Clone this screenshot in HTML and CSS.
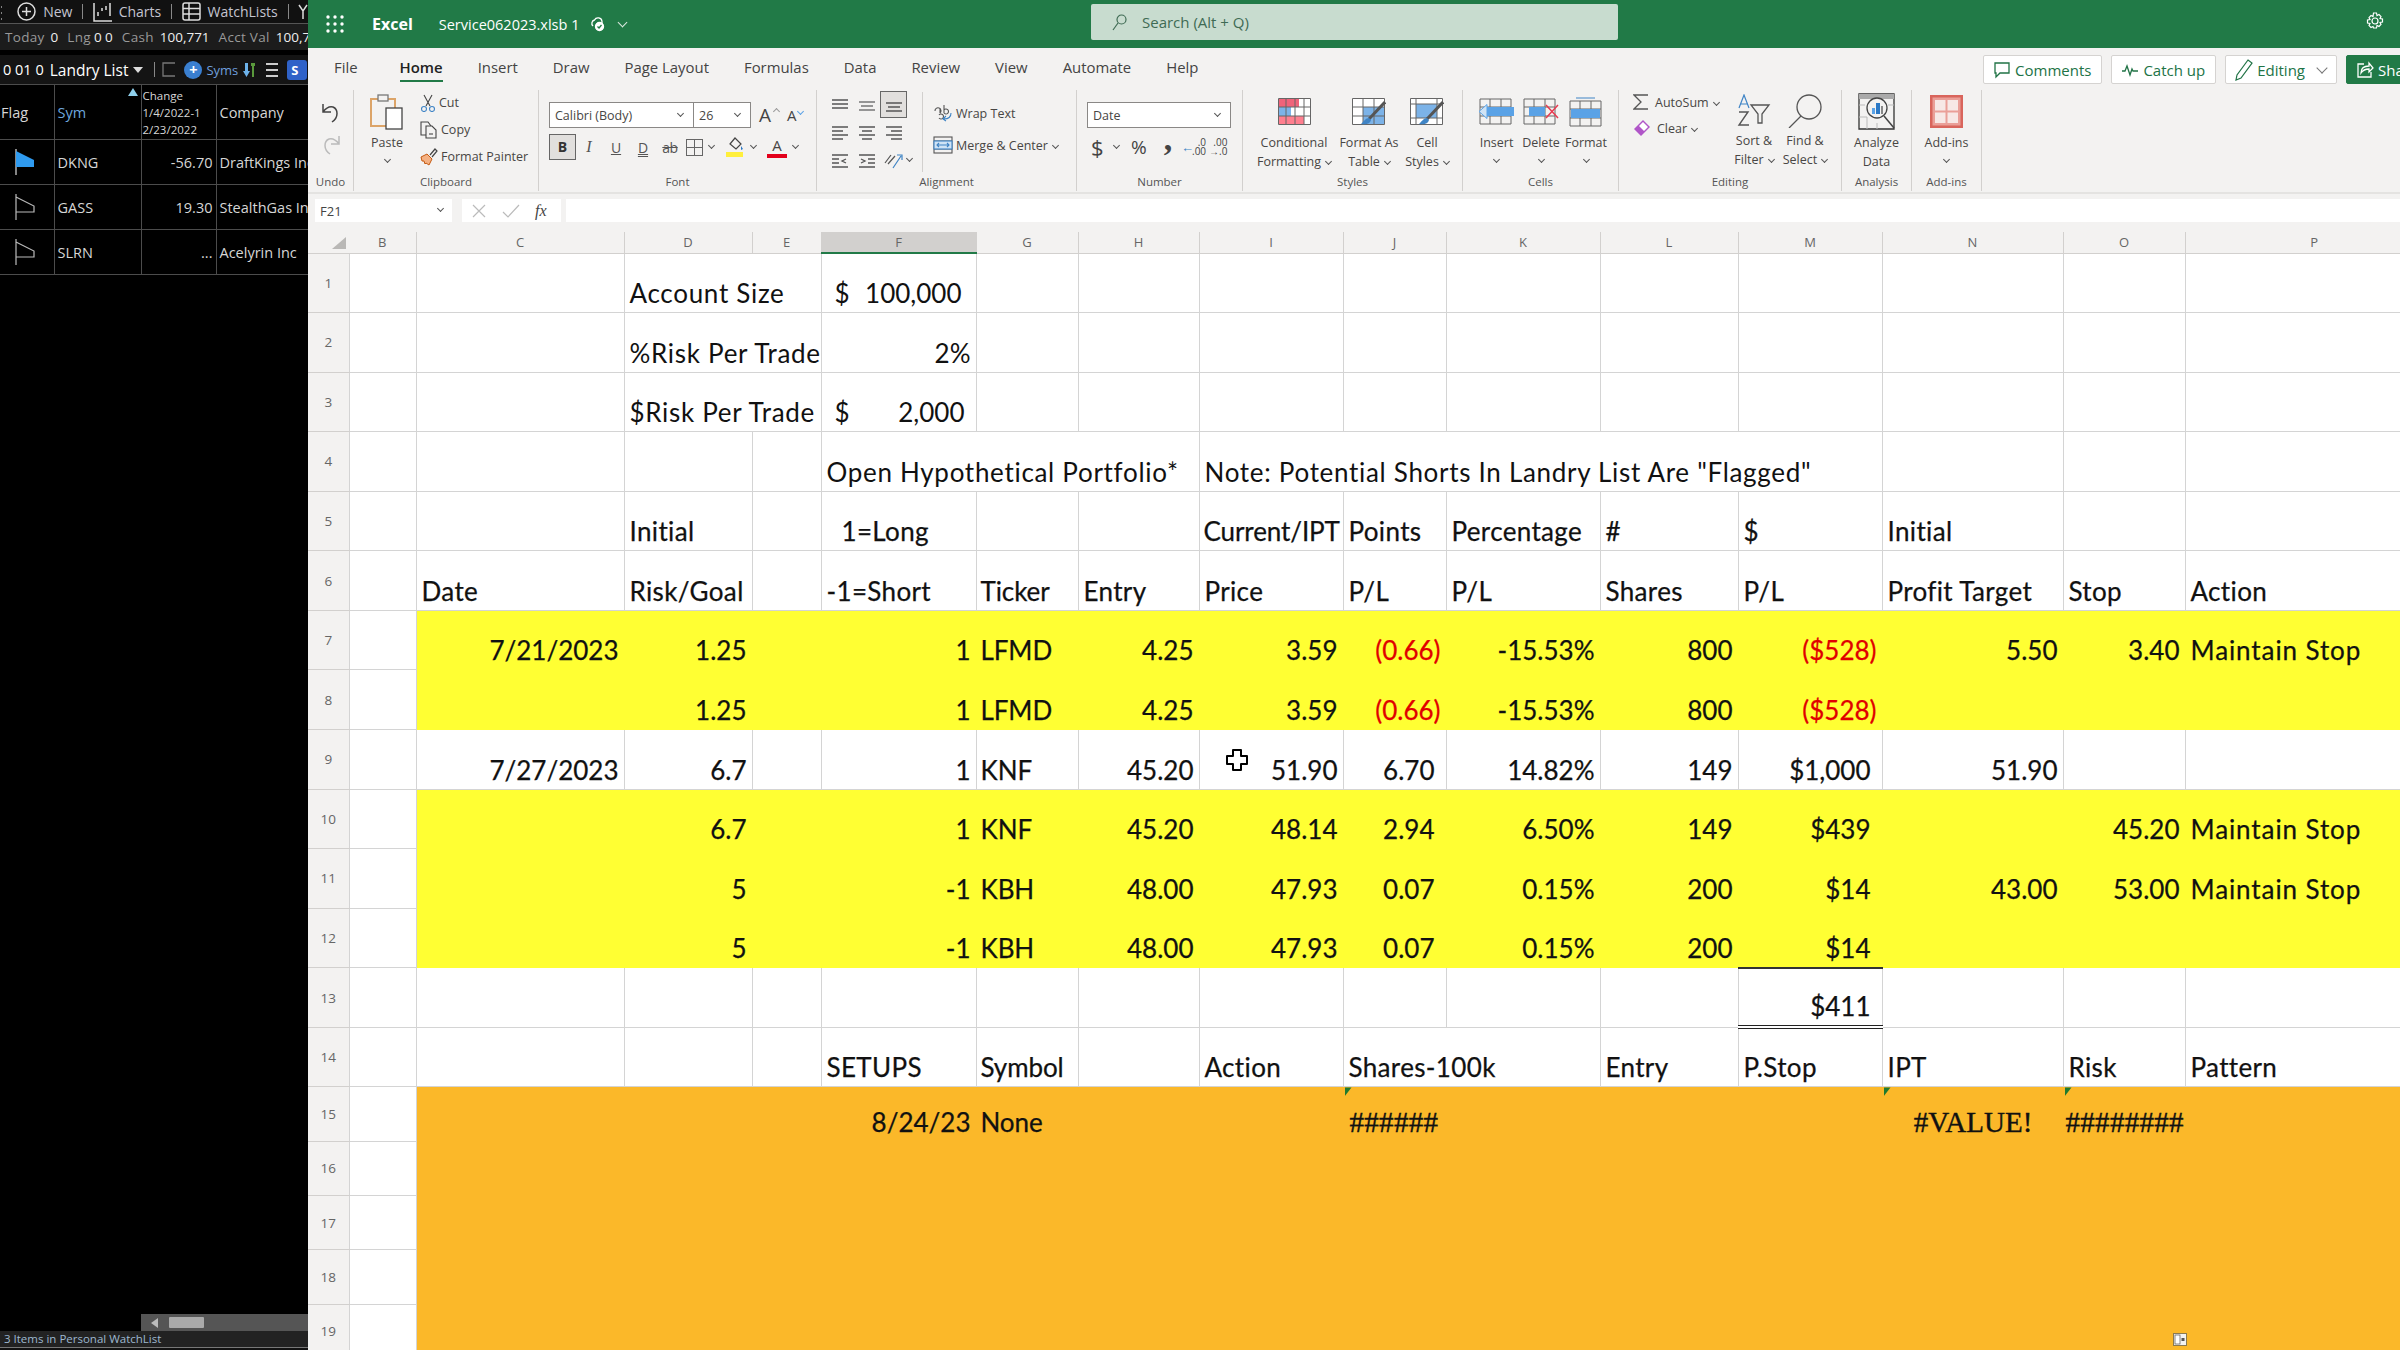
FILE: index.html
```html
<!DOCTYPE html>
<html lang="en">
<head>
  <meta charset="UTF-8" />
  <title>Service062023.xlsb - Excel</title>
  <link rel="stylesheet" href="styles.css">
</head>
<body>
  <div class="watch">
    <div class="wbar">
      <span class="grip"></span>
      <svg class="wi" width="19" height="19" viewBox="0 0 19 19" fill="none" stroke="#ddd" stroke-width="1.5"><circle cx="9.5" cy="9.5" r="8.5"/><path d="M9.5 5v9M5 9.5h9"/></svg>
      <span>New</span><i class="wsep"></i>
      <svg class="wi" width="19" height="20" viewBox="0 0 19 20" fill="none" stroke="#ddd" stroke-width="1.5"><path d="M1 1v18h18M5 14v-4M9 9V6M13 8V4M17 14V1"/></svg>
      <span>Charts</span><i class="wsep"></i>
      <svg class="wi" width="19" height="19" viewBox="0 0 19 19" fill="none" stroke="#ddd" stroke-width="1.5"><rect x="1" y="1" width="17" height="17" rx="2"/><path d="M1 6.5h17M1 12h17M7 1v17"/></svg>
      <span>WatchLists</span><i class="wsep"></i>
      <svg class="wi" width="10" height="16" viewBox="0 0 10 16" fill="none" stroke="#ddd" stroke-width="1.5"><path d="M1 1l4 6 4-6M5 7v8"/></svg>
    </div>
    <div class="wstats">
      <span class="dim">Today</span><b>0</b><span class="dim">Lng</span><b class="tight">0 0</b><span class="dim">Cash</span><b>100,771</b><span class="dim">Acct Val</span><b>100,7</b>
    </div>
    <div class="wlist">
      <span>0 01 0</span><strong>Landry List</strong><i class="wdown"></i><i class="wsep short"></i>
      <svg width="13" height="15" viewBox="0 0 13 15" fill="none" stroke="#777" stroke-width="1.3"><path d="M13 1H1v13h12"/></svg>
      <span class="wplus">+</span><span class="syms">Syms</span>
      <svg width="13" height="16" viewBox="0 0 13 16"><path d="M2 1h3v8h2l-3.500 6L0 9h2z" fill="#6db2ea"/><path d="M8 1h4v3h-1v11H9V4H8z" fill="#5a9a3c"/></svg>
      <span class="burger"></span><span class="chip">S</span>
    </div>
    <table class="wtable">
      <colgroup><col class="w1"><col class="w2"><col class="w3"><col class="w4"></colgroup>
      <tr class="whead">
        <th>Flag</th><th class="blue">Sym<i class="sort"></i></th><th class="chg">Change<br>1/4/2022-1<br>2/23/2022</th><th>Company</th>
      </tr>
      <tr>
        <td class="fl"><svg width="20" height="26" viewBox="0 0 20 26"><path d="M1 0v26" stroke="#ccc" stroke-width="1.300"/><path d="M1 2l18 9v7H1z" fill="#2f9bf0"/></svg></td>
        <td>DKNG</td><td class="num">-56.70</td><td>DraftKings Inc</td>
      </tr>
      <tr>
        <td class="fl"><svg width="20" height="26" viewBox="0 0 20 26" fill="none" stroke="#bbb" stroke-width="1.200"><path d="M1 0v26M1 3l18 9v6H1"/></svg></td>
        <td>GASS</td><td class="num">19.30</td><td>StealthGas Inc</td>
      </tr>
      <tr>
        <td class="fl"><svg width="20" height="26" viewBox="0 0 20 26" fill="none" stroke="#bbb" stroke-width="1.200"><path d="M1 0v26M1 3l18 9v6H1"/></svg></td>
        <td>SLRN</td><td class="num">...</td><td>Acelyrin Inc</td>
      </tr>
    </table>
    <div class="wfill"></div>
    <div class="wscroll"><span class="warrow"></span><span class="wthumb"></span></div>
    <div class="wstatus">3 Items in Personal WatchList</div>
    <div class="wfoot"></div>
  </div>

  <div class="excel">
    <div class="titlebar">
      <svg class="waffle" width="18" height="18" viewBox="0 0 18 18" fill="#fff"><circle cx="2" cy="2" r="1.700"/><circle cx="9" cy="2" r="1.700"/><circle cx="16" cy="2" r="1.700"/><circle cx="2" cy="9" r="1.700"/><circle cx="9" cy="9" r="1.700"/><circle cx="16" cy="9" r="1.700"/><circle cx="2" cy="16" r="1.700"/><circle cx="9" cy="16" r="1.700"/><circle cx="16" cy="16" r="1.700"/></svg>
      <span class="appname">Excel</span>
      <span class="docname">Service062023.xlsb 1</span>
      <svg class="cloud" width="16" height="16" viewBox="0 0 16 16" fill="none" stroke="#fff" stroke-width="1.300"><path d="M12 9V5.500A4 4 0 0 0 4.500 4 3.500 3.500 0 0 0 3 10"/><circle cx="9.500" cy="10.500" r="4" fill="#fff"/><path d="M7.500 10.500l1.500 1.500 2.500-3" stroke="#217a47"/></svg>
      <i class="chev light"></i>
      <div class="search">
        <svg width="15" height="17" viewBox="0 0 15 17" fill="none" stroke="#3f6b54" stroke-width="1.200"><circle cx="9.500" cy="5.500" r="4.500"/><path d="M6 9l-5 7"/></svg>
        <span>Search (Alt + Q)</span>
      </div>
      <svg class="gear" width="18" height="18" viewBox="0 0 18 18" fill="none" stroke="#fff" stroke-width="1.200"><circle cx="9" cy="9" r="3"/><path d="M7.500 1h3l.5 2.500 2-1 2 2-1 2 2.500.5v3l-2.500.5 1 2-2 2-2-1-.5 2.500h-3L7 14.500l-2 1-2-2 1-2L1.500 11V8l2.500-.5-1-2 2-2 2 1z"/></svg>
    </div>

    <div class="ribbon">
      <div class="tabs">
        <span class="tab first">File</span>
        <span class="tab active">Home</span>
        <span class="tab">Insert</span>
        <span class="tab">Draw</span>
        <span class="tab">Page Layout</span>
        <span class="tab">Formulas</span>
        <span class="tab">Data</span>
        <span class="tab">Review</span>
        <span class="tab">View</span>
        <span class="tab">Automate</span>
        <span class="tab">Help</span>
        <div class="actions">
          <span class="act">
            <svg width="18" height="18" viewBox="0 0 18 18" fill="none" stroke="#217346" stroke-width="1.300"><path d="M2 2h14v10H7l-4 4v-4H2z"/></svg>Comments
          </span>
          <span class="act">
            <svg width="18" height="14" viewBox="0 0 18 14" fill="none" stroke="#217346" stroke-width="1.300"><path d="M1 8h3l2-5 3 9 2-6 1 2h5"/></svg>Catch up
          </span>
          <span class="act">
            <svg width="18" height="22" viewBox="0 0 18 22" fill="none" stroke="#217346" stroke-width="1.200"><path d="M13 1l4 3L6 19l-5 2 1-5z"/></svg>Editing<i class="chev edit"></i>
          </span>
          <span class="act share">
            <svg width="18" height="18" viewBox="0 0 18 18" fill="none" stroke="#fff" stroke-width="1.300"><path d="M8 3H2v13h13v-5M5 12c0-5 3-7 8-7V2l4 5-4 4V8c-4 0-6 1-8 4z"/></svg>Share
          </span>
        </div>
      </div>

      <div class="groups">
        <div class="group g-undo">
          <div class="gbody stack">
            <svg width="22" height="22" viewBox="0 0 22 22" fill="none" stroke="#444" stroke-width="1.500"><path d="M3 2v8h8M3 10c3-4 6-6 10-5 5 2 6 10-1 15"/></svg>
            <svg width="22" height="22" viewBox="0 0 22 22" fill="none" stroke="#bbb" stroke-width="1.500"><path d="M19 2v8h-8M19 10c-3-4-6-6-10-5-5 2-6 10 1 15"/></svg>
          </div>
          <div class="glabel">Undo</div>
        </div>

        <div class="group g-clip">
          <div class="gbody">
            <div class="big paste">
              <div class="bicon">
                <svg width="34" height="36" viewBox="0 0 34 36" fill="none"><rect x="1" y="5" width="24" height="27" stroke="#dca468" stroke-width="2"/><rect x="8" y="1" width="10" height="6" fill="#f3f2f1" stroke="#777" stroke-width="1.300"/><rect x="16" y="14" width="16" height="21" fill="#fff" stroke="#444" stroke-width="1.300"/></svg>
              </div>
              <span>Paste</span><i class="chev"></i>
            </div>
            <div class="smalls clip">
              <div class="si">
                <svg width="16" height="18" viewBox="0 0 16 18" fill="none" stroke="#444" stroke-width="1.100"><path d="M4 1l6 11M12 1L6 12"/><circle cx="4" cy="15" r="2.500" stroke="#3f84c5"/><circle cx="12" cy="15" r="2.500" stroke="#3f84c5"/></svg>
                <span>Cut</span>
              </div>
              <div class="si">
                <svg width="18" height="18" viewBox="0 0 18 18" fill="none" stroke="#444" stroke-width="1.100"><path d="M7 14H1V1h7l3 4"/><path d="M6 5h6l4 4v8H6z" fill="#f3f2f1"/><path d="M9 13h4"/></svg>
                <span>Copy</span>
              </div>
              <div class="si">
                <svg width="18" height="18" viewBox="0 0 18 18" fill="none"><path d="M1 9l6-3 5 5-3 6-3-2-1 1-1-3-2 0z" fill="#f4b183" stroke="#c55a11"/><path d="M10 7l5-6 2 2-5 6" stroke="#444" stroke-width="1.200"/></svg>
                <span>Format Painter</span>
              </div>
            </div>
          </div>
          <div class="glabel">Clipboard</div>
        </div>

        <div class="group g-font">
          <div class="gbody column">
            <div class="frow">
              <span class="sel fname">Calibri (Body)<i class="chev"></i></span>
              <span class="sel fsize">26<i class="chev"></i></span>
              <span class="growA">A<i class="carat"></i></span>
              <span class="growA small">A<i class="carat down"></i></span>
            </div>
            <div class="frow lower">
              <span class="bold-btn">B</span>
              <span class="fi it">I</span>
              <span class="fi ul">U</span>
              <span class="fi ul dbl">D</span>
              <span class="fi st">ab</span>
              <svg class="bd" width="17" height="17" viewBox="0 0 17 17" fill="none" stroke="#666" stroke-width="1"><rect x=".5" y=".5" width="16" height="16"/><path d="M8.500 1v15M1 8.500h15"/></svg>
              <i class="chev tight"></i>
              <svg class="bd fill" width="19" height="20" viewBox="0 0 19 20"><path d="M9 1l6 6-5 5-6-5z" fill="none" stroke="#444" stroke-width="1.200"/><path d="M15 9l2 3-2 1z" fill="#2b78c5"/><rect y="15" width="17" height="5" fill="#ffef3c"/></svg>
              <i class="chev tight"></i>
              <span class="fc">A</span>
              <i class="chev tight"></i>
            </div>
          </div>
          <div class="glabel">Font</div>
        </div>

        <div class="group g-align">
          <div class="gbody">
            <div class="agrid">
              <svg width="18" height="14" viewBox="0 0 18 14" stroke="#555" stroke-width="1.300"><path d="M1 2h16M1 6h16M1 10h16"/></svg>
              <svg width="18" height="14" viewBox="0 0 18 14" stroke="#777" stroke-width="1.300"><path d="M1 4h16M3 8h12M1 12h16"/></svg>
              <span class="abox"><svg width="18" height="14" viewBox="0 0 18 14" stroke="#555" stroke-width="1.300"><path d="M1 5h16M3 9h12M1 13h16"/></svg></span>
              <svg width="18" height="16" viewBox="0 0 18 16" stroke="#555" stroke-width="1.300"><path d="M1 2h16M1 6h11M1 10h16M1 14h11"/></svg>
              <svg width="18" height="16" viewBox="0 0 18 16" stroke="#555" stroke-width="1.300"><path d="M1 2h16M4 6h10M1 10h16M4 14h10"/></svg>
              <svg width="18" height="16" viewBox="0 0 18 16" stroke="#555" stroke-width="1.300"><path d="M1 2h16M6 6h11M1 10h16M6 14h11"/></svg>
              <svg width="18" height="16" viewBox="0 0 18 16" stroke="#555" stroke-width="1.300"><path d="M1 2h16M1 6h7M1 10h7M1 14h16M15 6l-4 2 4 2" fill="none"/></svg>
              <svg width="18" height="16" viewBox="0 0 18 16" stroke="#555" stroke-width="1.300"><path d="M1 2h16M10 6h7M10 10h7M1 14h16M3 6l4 2-4 2" fill="none"/></svg>
              <span class="orient"><svg width="22" height="20" viewBox="0 0 22 20" fill="none" stroke="#555" stroke-width="1.200"><path d="M2 12l6-8M5 13l7-8"/><path d="M10 17l8-12M14 4h5v5" stroke="#3f84c5"/></svg><i class="chev tight"></i></span>
            </div>
            <div class="asep"></div>
            <div class="smalls wrapm">
              <div class="si">
                <svg width="20" height="18" viewBox="0 0 20 18" fill="none" stroke="#555" stroke-width="1.100"><path d="M2 7a3 3 0 1 1 5 2M7 4v5M11 1v8M11 6a2.500 2.500 0 1 1 0 3M6 14a2.500 2.500 0 1 0 0-3"/><path d="M18 9c0 4-3 6-7 6M13 12l-3 3 3 2" stroke="#3f84c5"/></svg>
                <span>Wrap Text</span>
              </div>
              <div class="si">
                <svg width="20" height="18" viewBox="0 0 20 18" fill="none" stroke="#555" stroke-width="1.100"><rect x="1" y="1" width="18" height="16"/><path d="M1 5h18M1 13h18"/><rect x="1" y="5" width="18" height="8" fill="#cfe3f5" stroke="#3f84c5"/><path d="M4 9h12M6 7L4 9l2 2M14 7l2 2-2 2" stroke="#3f84c5"/></svg>
                <span>Merge &amp; Center<i class="chev"></i></span>
              </div>
            </div>
          </div>
          <div class="glabel alabel">Alignment</div>
        </div>

        <div class="group g-num">
          <div class="gbody column">
            <div class="frow"><span class="sel nfmt">Date<i class="chev"></i></span></div>
            <div class="frow lower nrow">
              <span class="nb">$</span><i class="chev tight"></i>
              <span class="nb pct">%</span>
              <span class="nb cm">,</span>
              <span class="dec"><em>&larr;</em><span class="dcol"><u>.0</u><u>.00</u></span></span>
              <span class="dec"><span class="dcol"><u>.00</u><u>&rarr;.0</u></span></span>
            </div>
          </div>
          <div class="glabel">Number</div>
        </div>

        <div class="group g-styles">
          <div class="gbody">
            <div class="big w-cond">
              <div class="bicon">
                <svg width="33" height="27" viewBox="0 0 33 27"><rect x=".5" y=".5" width="32" height="26" fill="#fff"/><rect x="1" y="1" width="20" height="8" fill="#f0637a"/><rect x="1" y="9" width="12" height="9" fill="#7cb3e8"/><rect x="1" y="18" width="25" height="8" fill="#ff7f8f"/><path d="M.5.5h32v26H.5zM.5 9h32M.5 18h32M8 0v27M17 0v27M26 0v27" fill="none" stroke="#666"/></svg>
              </div>
              <span>Conditional</span><span>Formatting<i class="chev"></i></span>
            </div>
            <div class="big w-tbl">
              <div class="bicon">
                <svg width="34" height="27" viewBox="0 0 34 27"><rect x=".5" y=".5" width="32" height="26" fill="#fff"/><rect x="11" y="9" width="21" height="17" fill="#7cb3e8"/><path d="M.5.5h32v26H.5zM.5 9h32M.5 18h32M11 0v27M22 0v27" fill="none" stroke="#666"/><path d="M33 4L17 21" stroke="#555" stroke-width="3"/><path d="M17 20c-3 0-5 3-8 6 5 1 9 0 10-4z" fill="#3f84c5"/></svg>
              </div>
              <span>Format As</span><span>Table<i class="chev"></i></span>
            </div>
            <div class="big w-cell">
              <div class="bicon">
                <svg width="34" height="27" viewBox="0 0 34 27"><rect x=".5" y=".5" width="32" height="26" fill="#fff"/><rect x="6" y="6" width="21" height="14" fill="#7cb3e8"/><path d="M.5.5h32v26H.5zM6 0v27M27 0v27M0 6h33M0 20h33" fill="none" stroke="#666"/><path d="M33 4L17 21" stroke="#555" stroke-width="3"/><path d="M17 20c-3 0-5 3-8 6 5 1 9 0 10-4z" fill="#3f84c5"/></svg>
              </div>
              <span>Cell</span><span>Styles<i class="chev"></i></span>
            </div>
          </div>
          <div class="glabel">Styles</div>
        </div>

        <div class="group g-cells">
          <div class="gbody">
            <div class="big w-ins">
              <div class="bicon">
                <svg width="36" height="27" viewBox="0 0 36 27"><path d="M1 1h31v25H1zM1 9h31M1 18h31M11 1v25M22 1v25" fill="none" stroke="#666"/><rect x="8" y="9" width="27" height="9" fill="#5aa2e6"/><path d="M0 13.500l8-7v14z" fill="#cfe3f5" stroke="#5aa2e6"/></svg>
              </div>
              <span>Insert</span><i class="chev"></i>
            </div>
            <div class="big w-del">
              <div class="bicon">
                <svg width="36" height="27" viewBox="0 0 36 27"><path d="M1 1h31v25H1zM1 9h31M1 18h31M11 1v25M22 1v25" fill="none" stroke="#666"/><rect x="6" y="9" width="16" height="9" fill="#5aa2e6"/><path d="M23 7l12 13M35 7L23 20" stroke="#e8394f" stroke-width="1.500"/></svg>
              </div>
              <span>Delete</span><i class="chev"></i>
            </div>
            <div class="big w-fmt">
              <div class="bicon">
                <svg width="34" height="30" viewBox="0 0 34 30"><path d="M1 4h31v25H1zM1 12h31M1 21h31M11 4v25M22 4v25" fill="none" stroke="#666"/><rect x="2" y="12" width="29" height="9" fill="#5aa2e6"/><path d="M7 1h19" stroke="#3f84c5"/></svg>
              </div>
              <span>Format</span><i class="chev"></i>
            </div>
          </div>
          <div class="glabel">Cells</div>
        </div>

        <div class="group g-edit">
          <div class="gbody">
            <div class="smalls edits">
              <div class="si">
                <svg width="16" height="18" viewBox="0 0 16 18" fill="none" stroke="#555" stroke-width="1.300"><path d="M15 2H1l7 7-7 7h14"/></svg>
                <span>AutoSum<i class="chev"></i></span>
              </div>
              <div class="si">
                <svg width="18" height="18" viewBox="0 0 18 18"><path d="M10 1l7 7-9 9-7-7z" fill="#b055c8"/><path d="M10 3l5 5-4 4-5-5z" fill="#fff"/></svg>
                <span>Clear<i class="chev"></i></span>
              </div>
            </div>
            <div class="big w-sort">
              <div class="bicon short">
                <svg width="34" height="34" viewBox="0 0 34 34" fill="none"><path d="M2 14L7 1l5 13M4 10h6" stroke="#3f84c5" stroke-width="1.200"/><path d="M2 18h9L2 31h10" stroke="#555" stroke-width="1.400"/><path d="M14 11h18l-7 9v9h-4v-9z" stroke="#555" stroke-width="1.300"/></svg>
              </div>
              <span>Sort &amp;</span><span>Filter<i class="chev"></i></span>
            </div>
            <div class="big w-find">
              <div class="bicon short">
                <svg width="36" height="34" viewBox="0 0 36 34" fill="none" stroke="#555" stroke-width="1.300"><circle cx="22" cy="13" r="12"/><path d="M14 22L2 34"/></svg>
              </div>
              <span>Find &amp;</span><span>Select<i class="chev"></i></span>
            </div>
          </div>
          <div class="glabel">Editing</div>
        </div>

        <div class="group g-ana">
          <div class="gbody">
            <div class="big w-full">
              <div class="bicon">
                <svg width="38" height="37" viewBox="0 0 38 37" fill="none"><path d="M1 1h35v35H1z" stroke="#333" stroke-width="1.300"/><rect x="1" y="1" width="35" height="5" fill="#aaa"/><path d="M1 12h6M30 12h6M1 24h8M9 24v12M19 30v6" stroke="#bbb"/><circle cx="19" cy="15" r="10" fill="#f3f2f1" stroke="#444" stroke-width="1.300"/><rect x="14" y="15" width="3" height="6" fill="#5aa2e6"/><rect x="18" y="10" width="4" height="11" fill="#2b78c5"/><rect x="23" y="13" width="2" height="8" fill="#888"/><path d="M26 23l10 12" stroke="#444" stroke-width="1.500"/></svg>
              </div>
              <span>Analyze</span><span>Data</span>
            </div>
          </div>
          <div class="glabel">Analysis</div>
        </div>

        <div class="group g-add">
          <div class="gbody">
            <div class="big w-full">
              <div class="bicon">
                <svg width="33" height="33" viewBox="0 0 33 33"><rect width="33" height="33" fill="#d9655c"/><rect x="2.500" y="2.500" width="28" height="28" fill="#ea9f98"/><rect x="5" y="5" width="10.500" height="10.500" fill="#f7e8e6"/><rect x="17.500" y="5" width="10.500" height="10.500" fill="#f7e8e6"/><rect x="5" y="17.500" width="10.500" height="10.500" fill="#f7e8e6"/><rect x="17.500" y="17.500" width="10.500" height="10.500" fill="#f7e8e6"/></svg>
              </div>
              <span>Add-ins</span><i class="chev"></i>
            </div>
          </div>
          <div class="glabel">Add-ins</div>
        </div>
      </div>
    </div>

    <div class="fbar">
      <span class="namebox">F21<i class="chev"></i></span>
      <span class="fxbox">
        <svg width="16" height="16" viewBox="0 0 16 16" fill="none" stroke="#bbb" stroke-width="1.200"><path d="M2 2l12 12M14 2L2 14"/></svg>
        <svg width="18" height="16" viewBox="0 0 18 16" fill="none" stroke="#bbb" stroke-width="1.200"><path d="M1 9l5 5L17 2"/></svg>
        <em>fx</em>
      </span>
      <span class="finput"></span>
    </div>

    <div class="sheet">
      <table class="grid">
        <colgroup>
          <col class="cRH"><col class="cB"><col class="cC"><col class="cD"><col class="cE"><col class="cF"><col class="cG"><col class="cH"><col class="cI"><col class="cJ"><col class="cK"><col class="cL"><col class="cM"><col class="cN"><col class="cO"><col class="cP">
        </colgroup>
        <thead>
          <tr>
            <th class="corner"><i></i></th><th>B</th><th>C</th><th>D</th><th>E</th><th class="selcol">F</th><th>G</th><th>H</th><th>I</th><th>J</th><th>K</th><th>L</th><th>M</th><th>N</th><th>O</th><th>P</th>
          </tr>
        </thead>
        <tbody>
          <tr class="lt">
            <th>1</th><td></td><td></td><td colspan="2">Account Size</td>
            <td class="acct"><span class="acct-in"><span>$</span><span>100,000</span></span></td>
            <td></td><td></td><td></td><td></td><td></td><td></td><td></td><td></td><td></td><td></td>
          </tr>
          <tr class="lt">
            <th>2</th><td></td><td></td><td colspan="2">%Risk Per Trade</td>
            <td class="n">2%</td>
            <td></td><td></td><td></td><td></td><td></td><td></td><td></td><td></td><td></td><td></td>
          </tr>
          <tr class="lt">
            <th>3</th><td></td><td></td><td colspan="2">$Risk Per Trade</td>
            <td class="acct"><span class="acct-in two"><span>$</span><span>2,000</span></span></td>
            <td></td><td></td><td></td><td></td><td></td><td></td><td></td><td></td><td></td><td></td>
          </tr>
          <tr class="lt">
            <th>4</th><td></td><td></td><td></td><td></td>
            <td colspan="3">Open Hypothetical Portfolio*</td>
            <td colspan="5">Note: Potential Shorts In Landry List Are "Flagged"</td>
            <td></td><td></td><td></td>
          </tr>
          <tr>
            <th>5</th><td></td><td></td><td>Initial</td><td></td><td class="indent">1=Long</td><td></td><td></td><td class="caps">Current/IPT</td><td>Points</td><td>Percentage</td><td>#</td><td>$</td><td>Initial</td><td></td><td></td>
          </tr>
          <tr>
            <th>6</th><td></td><td>Date</td><td>Risk/Goal</td><td></td><td>-1=Short</td><td class="caps">Ticker</td><td>Entry</td><td>Price</td><td>P/L</td><td>P/L</td><td>Shares</td><td>P/L</td><td>Profit Target</td><td>Stop</td><td>Action</td>
          </tr>
          <tr class="yel">
            <th>7</th><td class="blank"></td><td class="n">7/21/2023</td><td class="n">1.25</td><td></td><td class="n">1</td><td class="caps">LFMD</td><td class="n">4.25</td><td class="n">3.59</td><td class="n red">(0.66)</td><td class="n">-15.53%</td><td class="n">800</td><td class="n red">($528)</td><td class="n">5.50</td><td class="n">3.40</td><td class="ms">Maintain Stop</td>
          </tr>
          <tr class="yel">
            <th>8</th><td class="blank"></td><td></td><td class="n">1.25</td><td></td><td class="n">1</td><td class="caps">LFMD</td><td class="n">4.25</td><td class="n">3.59</td><td class="n red">(0.66)</td><td class="n">-15.53%</td><td class="n">800</td><td class="n red">($528)</td><td></td><td></td><td></td>
          </tr>
          <tr>
            <th>9</th><td></td><td class="n">7/27/2023</td><td class="n">6.7</td><td></td><td class="n">1</td><td class="caps">KNF</td><td class="n">45.20</td>
            <td class="n over">51.90
              <svg class="cursor" width="22" height="22" viewBox="0 0 22 22"><path d="M7 1h8v6h6v8h-6v6H7v-6H1V7h6z" fill="#fff" stroke="#000" stroke-width="2" stroke-linejoin="round"/></svg>
            </td>
            <td class="n pp">6.70</td><td class="n">14.82%</td><td class="n">149</td><td class="n pp">$1,000</td><td class="n">51.90</td><td></td><td></td>
          </tr>
          <tr class="yel">
            <th>10</th><td class="blank"></td><td></td><td class="n">6.7</td><td></td><td class="n">1</td><td class="caps">KNF</td><td class="n">45.20</td><td class="n">48.14</td><td class="n pp">2.94</td><td class="n">6.50%</td><td class="n">149</td><td class="n pp">$439</td><td></td><td class="n">45.20</td><td class="ms">Maintain Stop</td>
          </tr>
          <tr class="yel">
            <th>11</th><td class="blank"></td><td></td><td class="n">5</td><td></td><td class="n">-1</td><td class="caps">KBH</td><td class="n">48.00</td><td class="n">47.93</td><td class="n pp">0.07</td><td class="n">0.15%</td><td class="n">200</td><td class="n pp">$14</td><td class="n">43.00</td><td class="n">53.00</td><td class="ms">Maintain Stop</td>
          </tr>
          <tr class="yel">
            <th>12</th><td class="blank"></td><td></td><td class="n">5</td><td></td><td class="n">-1</td><td class="caps">KBH</td><td class="n">48.00</td><td class="n">47.93</td><td class="n pp">0.07</td><td class="n">0.15%</td><td class="n">200</td><td class="n pp">$14</td><td></td><td></td><td></td>
          </tr>
          <tr>
            <th>13</th><td></td><td></td><td></td><td></td><td></td><td></td><td></td><td></td><td></td><td></td><td></td><td class="n pp total">$411</td><td></td><td></td><td></td>
          </tr>
          <tr>
            <th>14</th><td></td><td></td><td></td><td></td><td>SETUPS</td><td class="caps">Symbol</td><td></td><td>Action</td><td colspan="2">Shares-100k</td><td>Entry</td><td>P.Stop</td><td>IPT</td><td>Risk</td><td>Pattern</td>
          </tr>
          <tr class="org">
            <th>15</th><td class="blank"></td><td></td><td></td><td></td><td class="n">8/24/23</td><td class="caps">None</td><td></td><td></td><td class="err flagged">######</td><td></td><td></td><td></td><td class="err flagged mid">#VALUE!</td><td class="err flagged tightcell">########</td><td></td>
          </tr>
          <tr class="org">
            <th>16</th><td class="blank"></td><td colspan="14"></td>
          </tr>
          <tr class="org">
            <th>17</th><td class="blank"></td><td colspan="14"></td>
          </tr>
          <tr class="org">
            <th>18</th><td class="blank"></td><td colspan="14"></td>
          </tr>
          <tr class="org">
            <th>19</th><td class="blank"></td><td colspan="14"></td>
          </tr>
        </tbody>
      </table>
      <svg class="pasteopt" width="14" height="13" viewBox="0 0 14 13"><rect x=".5" y=".5" width="13" height="12" fill="#f3f2f1" stroke="#8a7a50"/><rect x="2" y="2" width="5" height="9" fill="#fff" stroke="#555" stroke-width=".7"/><rect x="8.500" y="5" width="3" height="3" fill="#555"/></svg>
    </div>
  </div>
</body>
</html>
```

FILE: styles.css
```css
html, body {
  margin: 0;
  padding: 0;
  height: 100%;
}

body {
  width: 2400px;
  height: 1350px;
  display: flex;
  overflow: hidden;
  font-family: 'Open Sans', sans-serif;
  background: #000;
}

/* left watchlist panel */
.watch {
  width: 308px;
  flex: none;
  display: flex;
  flex-direction: column;
  background: #000;
  color: #ccc;
  font-size: 14px;
  overflow: hidden;
}

.wbar {
  height: 24px;
  box-sizing: border-box;
  display: flex;
  align-items: center;
  gap: 7px;
  padding-left: 1px;
  border-bottom: 1px solid #555;
  background: #111;
  color: #c4c4d0;
  font-size: 14px;
  white-space: nowrap;
}

.grip {
  width: 4px;
  height: 16px;
  margin-right: 8px;
  background: radial-gradient(circle, #999 1.500px, transparent 2px) 0 0 / 4px 6px;
}

.wi {
  flex: none;
}

.wsep {
  width: 1px;
  height: 15px;
  margin: 0 3px;
  background: #888;
}

.wsep.short {
  margin: 0 2px 0 6px;
}

.wstats {
  height: 26px;
  box-sizing: border-box;
  display: flex;
  align-items: center;
  gap: 6px;
  padding-left: 5px;
  background: #1c1c1c;
  white-space: nowrap;
  font-size: 13.500px;
}

.wstats .dim {
  color: #999;
  letter-spacing: .3px;
}

.wstats b {
  font-weight: 400;
  color: #eee;
  margin-right: 3px;
}

.wstats .tight {
  margin-left: -3px;
}

.wlist {
  height: 29px;
  margin-top: 5px;
  box-sizing: border-box;
  display: flex;
  align-items: center;
  gap: 5px;
  padding-left: 3px;
  background: #141414;
  color: #fff;
  font-size: 14.500px;
  white-space: nowrap;
}

.wlist strong {
  font-weight: 400;
  font-size: 15.500px;
  margin-left: 1px;
}

.wdown {
  width: 0;
  height: 0;
  border-left: 5px solid transparent;
  border-right: 5px solid transparent;
  border-top: 6px solid #ddd;
}

.wplus {
  width: 18px;
  height: 18px;
  flex: none;
  margin-left: 4px;
  border-radius: 50%;
  background: #3a7fd0;
  color: #fff;
  font-weight: 700;
  text-align: center;
  line-height: 18px;
}

.syms {
  color: #6f9fdd;
  font-size: 13px;
  margin-left: -1px;
}

.burger {
  width: 12px;
  height: 10px;
  margin-left: 5px;
  border-top: 2px solid #ccc;
  border-bottom: 2px solid #ccc;
  background: linear-gradient(#ccc, #ccc) 0 4px / 12px 2px no-repeat;
}

.chip {
  width: 16px;
  height: 20px;
  margin-left: 4px;
  flex: none;
  border-radius: 3px;
  background: #2f62c8;
  font-size: 13px;
  font-weight: 700;
  line-height: 20px;
  padding-left: 4px;
}

.wtable {
  width: 308px;
  table-layout: fixed;
  border-collapse: collapse;
  border-top: 1px solid #555;
}

.w1 { width: 54px; }
.w2 { width: 87px; }
.w3 { width: 75px; }
.w4 { width: 92px; }

.wtable th,
.wtable td {
  height: 45px;
  box-sizing: border-box;
  padding: 0 3px;
  border: 1px solid #4c4c4c;
  font-size: 14.500px;
  font-weight: 400;
  text-align: left;
  white-space: nowrap;
  overflow: hidden;
  color: #d6d6d6;
}

.wtable tr > :first-child {
  border-left: 0;
  padding-left: 1px;
}

.wtable tr > :last-child {
  border-right: 0;
}

.whead th {
  height: 55px;
  position: relative;
}

.wtable .blue {
  color: #6ea7de;
}

.sort {
  position: absolute;
  right: 3px;
  top: 3px;
  width: 0;
  height: 0;
  border-left: 5px solid transparent;
  border-right: 5px solid transparent;
  border-bottom: 8px solid #8fd0ec;
}

.wtable .chg {
  font-size: 11.500px;
  line-height: 17px;
  padding: 0 1px;
}

.wtable tr > td.fl {
  padding-left: 15px;
  line-height: 0;
}

.wtable .num {
  text-align: right;
}

.wfill {
  flex: 1;
}

.wscroll {
  height: 17px;
  margin-left: 141px;
  display: flex;
  align-items: center;
  background: #555;
}

.warrow {
  width: 0;
  height: 0;
  margin-left: 10px;
  border-top: 5px solid transparent;
  border-bottom: 5px solid transparent;
  border-right: 7px solid #bbb;
}

.wthumb {
  width: 35px;
  height: 11px;
  margin-left: 11px;
  background: #aaa;
  border-radius: 1px;
}

.wstatus {
  height: 16px;
  padding-left: 4px;
  background: #222;
  color: #9db7cf;
  font-size: 11.500px;
  line-height: 16px;
}

.wfoot {
  height: 3px;
  background: #111;
  border-top: 1px solid #777;
  box-sizing: border-box;
}

/* excel */
.excel {
  width: 2092px;
  flex: none;
  display: flex;
  flex-direction: column;
  background: #fff;
  color: #444;
}

.titlebar {
  height: 48px;
  flex: none;
  position: relative;
  display: flex;
  align-items: center;
  background: #217a47;
  color: #fff;
  padding-left: 18px;
  font-size: 15px;
}

.waffle {
  margin-right: 28px;
}

.appname {
  font-weight: 700;
  font-size: 16px;
  margin-right: 26px;
}

.docname {
  font-size: 14.500px;
  margin-right: 11px;
}

.cloud {
  margin-right: 11px;
}

.search {
  position: absolute;
  left: 783px;
  top: 4px;
  width: 527px;
  height: 36px;
  box-sizing: border-box;
  display: flex;
  align-items: center;
  gap: 15px;
  padding-left: 21px;
  background: #c8dccf;
  border-radius: 2px;
  color: #3f6b54;
}

.gear {
  position: absolute;
  right: 16px;
  top: 12px;
}

.chev {
  display: inline-block;
  width: 5px;
  height: 5px;
  box-sizing: border-box;
  border-right: 1.300px solid #555;
  border-bottom: 1.300px solid #555;
  transform: rotate(45deg);
  margin-left: 5px;
  position: relative;
  top: -2px;
}

.chev.light {
  width: 7px;
  height: 7px;
  border-color: #dce8e0;
  margin-left: 2px;
}

.chev.edit {
  width: 8px;
  height: 8px;
  border-color: #777;
  margin-left: 9px;
}

.chev.tight {
  margin-left: 0;
  flex: none;
}

.ribbon {
  height: 144px;
  flex: none;
  box-sizing: border-box;
  background: #f3f2f1;
  display: flex;
  flex-direction: column;
}

.tabs {
  height: 42px;
  flex: none;
  box-sizing: border-box;
  display: flex;
  gap: 35px;
  padding-left: 26px;
  font-size: 14.900px;
  color: #444;
}

.tab {
  height: 34px;
  line-height: 39px;
  box-sizing: border-box;
}

.tab.first {
  margin-right: 7px;
}

.tab.active {
  color: #222;
  font-weight: 600;
  border-bottom: 2px solid #217a47;
}

.actions {
  margin-left: auto;
  display: flex;
  gap: 9px;
  padding-top: 7px;
  margin-right: -40px;
}

.act {
  height: 29px;
  box-sizing: border-box;
  display: flex;
  align-items: center;
  gap: 4px;
  padding: 0 10px 0 9px;
  background: #fff;
  border: 1px solid #d5d3d1;
  border-radius: 2px;
  color: #217346;
  font-size: 15px;
  font-weight: 500;
}

.act.share {
  background: #217a47;
  border-color: #217a47;
  color: #fff;
  width: 94px;
}

.groups {
  flex: 1;
  display: flex;
}

.group {
  box-sizing: border-box;
  display: flex;
  flex-direction: column;
  border-right: 1px solid #d2d0ce;
  height: 101px;
}

.g-undo { width: 46px; }
.g-clip { width: 185px; }
.g-font { width: 278px; }
.g-align { width: 260px; }
.g-num { width: 166px; }
.g-styles { width: 220px; }
.g-cells { width: 156px; }
.g-edit { width: 223px; }
.g-ana { width: 70px; }
.g-add { width: 70px; }

.gbody {
  flex: 1;
  min-height: 0;
  display: flex;
  font-size: 12.500px;
  color: #484644;
}

.glabel {
  height: 18px;
  line-height: 18px;
  font-size: 11.500px;
  color: #555;
  text-align: center;
}

.stack {
  flex-direction: column;
  align-items: center;
  gap: 10px;
  padding-top: 12px;
}

.big {
  display: flex;
  flex-direction: column;
  align-items: center;
  line-height: 19px;
  white-space: nowrap;
}

.bicon {
  height: 43px;
  flex: none;
  display: flex;
  align-items: center;
  justify-content: center;
}

.bicon.short {
  height: 41px;
}

.big > .chev {
  margin: 5px 0 0;
  top: 0;
}

.paste {
  width: 60px;
  margin-left: 3px;
}

.smalls {
  display: flex;
  flex-direction: column;
  padding-left: 5px;
  white-space: nowrap;
}

.smalls.clip {
  padding-left: 3px;
  margin-top: -3px;
}

.smalls.clip .si {
  gap: 3px;
}

.si {
  height: 27px;
  display: flex;
  align-items: center;
  gap: 5px;
}

.si svg {
  flex: none;
}

.si:first-child {
  margin-top: 2px;
}

.column {
  flex-direction: column;
  padding: 12px 0 0 10px;
}

.frow {
  display: flex;
  align-items: center;
  height: 26px;
}

.frow.lower {
  margin-top: 6px;
  gap: 6px;
}

.sel {
  height: 26px;
  box-sizing: border-box;
  display: flex;
  align-items: center;
  justify-content: space-between;
  padding: 0 10px 0 5px;
  background: #fff;
  border: 1px solid #8a8886;
  font-size: 12.500px;
}

.fname { width: 145px; }
.fsize { width: 58px; margin-left: -1px; }
.nfmt { width: 144px; }

.growA {
  margin-left: 8px;
  font-size: 19px;
  width: 22px;
  color: #444;
  position: relative;
}

.growA.small {
  margin-left: 6px;
  font-size: 15px;
}

.carat {
  position: absolute;
  left: 15px;
  top: 7px;
  width: 4px;
  height: 4px;
  border-left: 1px solid #999;
  border-top: 1px solid #999;
  transform: rotate(45deg);
}

.carat.down {
  left: 11px;
  top: 4px;
  border: 0;
  border-right: 1px solid #5aa2e6;
  border-bottom: 1px solid #5aa2e6;
}

.bold-btn {
  width: 27px;
  height: 26px;
  box-sizing: border-box;
  background: #e1dfdd;
  border: 1px solid #666;
  font-weight: 700;
  font-size: 14px;
  text-align: center;
  line-height: 24px;
  color: #333;
}

.fi {
  width: 20px;
  text-align: center;
  font-size: 14px;
  color: #555;
}

.it {
  font-family: 'Liberation Serif', serif;
  font-style: italic;
  font-size: 16px;
  margin: 0 1px 0 -3px;
}

.ul {
  text-decoration: underline;
  margin-right: 1px;
}

.dbl {
  text-decoration-style: double;
}

.st {
  text-decoration: line-through;
  letter-spacing: -.5px;
}

.bd {
  flex: none;
}

.bd.fill {
  margin-left: 6px;
}

.fc {
  width: 20px;
  margin-left: 5px;
  border-bottom: 4px solid #e3001b;
  text-align: center;
  font-size: 15px;
  line-height: 17px;
}

.agrid {
  width: 105px;
  box-sizing: border-box;
  padding: 1px 0 0 9px;
  display: grid;
  grid-template-columns: repeat(3, 27px);
  grid-template-rows: 27px 30px 25px;
  place-items: center;
}

.abox {
  width: 27px;
  height: 27px;
  box-sizing: border-box;
  display: flex;
  align-items: center;
  justify-content: center;
  background: #e1dfdd;
  border: 1px solid #666;
}

.orient {
  display: flex;
  align-items: center;
  gap: 2px;
  margin-left: 8px;
}

.asep {
  width: 1px;
  height: 80px;
  margin-top: 2px;
  background: #d2d0ce;
}

.smalls.wrapm {
  padding: 5px 0 0 10px;
}

.wrapm .si {
  height: 32px;
  gap: 3px;
}

.nrow {
  padding-left: 4px;
  gap: 0 !important;
}

.nb {
  font-size: 22px;
  line-height: 26px;
  width: 18px;
  color: #444;
}

.nrow > .chev {
  margin: 0 12px 0 5px;
}

.pct {
  width: 24px;
  font-size: 19px;
}

.cm {
  width: 26px;
  text-align: center;
  font-family: 'Liberation Serif', serif;
  font-weight: 700;
  font-size: 34px;
  line-height: 20px;
  position: relative;
  top: -8px;
}

.dec {
  width: 28px;
  display: flex;
  align-items: center;
  font-size: 10px;
  line-height: 9px;
  color: #444;
}

.dec em {
  color: #3f84c5;
  font-style: normal;
  font-size: 13px;
  margin-right: -2px;
}

.dcol {
  display: flex;
  flex-direction: column;
  align-items: flex-end;
}

.dcol u {
  text-decoration: none;
}

.w-cond { width: 86px; margin-left: 8px; }
.w-tbl { width: 70px; margin-left: -3px; }
.w-cell { width: 56px; margin-left: -5px; }
.w-ins { width: 47px; margin-left: 10px; }
.w-del { width: 46px; margin-left: -2px; }
.w-fmt { width: 44px; }
.edits { width: 108px; padding-left: 14px; box-sizing: border-box; margin-top: -3px; }
.edits .si { height: 26px; gap: 6px; }
.w-sort { width: 54px; }
.w-find { width: 54px; margin-left: -3px; }
.w-full { width: 100%; }

.fbar {
  height: 40px;
  flex: none;
  box-sizing: border-box;
  display: flex;
  gap: 5px;
  padding: 5px 0 10px 7px;
  background: #f3f2f1;
  border-top: 2px solid #e4e3e1;
}

.namebox,
.fxbox,
.finput {
  background: #fff;
  font-size: 13px;
  display: flex;
  align-items: center;
}

.namebox {
  width: 137px;
  box-sizing: border-box;
  padding: 0 9px 0 5px;
  justify-content: space-between;
}

.fxbox {
  width: 99px;
  margin-left: 5px;
  box-sizing: border-box;
  padding-left: 9px;
  gap: 15px;
}

.fxbox em {
  font-family: 'Liberation Serif', serif;
  font-size: 16px;
  color: #444;
}

.finput {
  flex: 1;
}

/* the sheet */
.sheet {
  flex: 1;
  min-height: 0;
  position: relative;
  overflow: hidden;
}

.grid {
  width: 2135px;
  table-layout: fixed;
  border-collapse: collapse;
  font-family: Lato, sans-serif;
  font-size: 26px;
  color: #111;
}

.cRH { width: 41px; }
.cB { width: 67px; }
.cC { width: 208px; }
.cD { width: 128px; }
.cE { width: 69px; }
.cF { width: 155px; }
.cG { width: 102px; }
.cH { width: 121px; }
.cI { width: 144px; }
.cJ { width: 103px; }
.cK { width: 154px; }
.cL { width: 138px; }
.cM { width: 144px; }
.cN { width: 181px; }
.cO { width: 122px; }
.cP { width: 258px; }

.grid thead th {
  height: 20px;
  padding: 0;
  background: #f3f2f1;
  border-left: 1px solid #d2d0ce;
  border-bottom: 1px solid #d2d0ce;
  font-family: 'Open Sans', sans-serif;
  font-size: 13px;
  font-weight: 400;
  color: #666;
  line-height: 18px;
}

.grid thead th:nth-child(2) {
  border-left: 0;
}

.grid thead th.selcol {
  background: #d2d0ce;
  border-bottom: 2px solid #217a47;
}

.corner {
  position: relative;
  border-left: 0 !important;
}

.corner i {
  position: absolute;
  left: 24px;
  top: 5px;
  width: 14px;
  height: 12px;
  background: #b9b8b6;
  clip-path: polygon(100% 0, 100% 100%, 0 100%);
}

.grid tbody tr {
  height: 59.570px;
}

.grid tbody tr.org {
  height: 54.300px;
}

.grid tbody th {
  padding: 0;
  background: #f3f2f1;
  border-bottom: 1px solid #d2d0ce;
  font-family: 'Open Sans', sans-serif;
  font-size: 13.500px;
  font-weight: 400;
  color: #666;
  vertical-align: middle;
}

.grid td {
  padding: 0 5px 4px;
  border: 1px solid #d4d4d4;
  vertical-align: bottom;
  line-height: 30px;
  white-space: nowrap;
  letter-spacing: .35px;
  -webkit-text-stroke: .25px #111;
}

.grid .lt td {
  -webkit-text-stroke: 0;
  letter-spacing: .7px;
}

.grid td.n,
.grid td.acct {
  text-align: right;
  letter-spacing: 0;
}

.grid tbody td.caps {
  letter-spacing: -.1px;
  padding-left: 4px;
}

.grid td.ms {
  letter-spacing: .9px;
}

.grid td.pp {
  padding-right: 11px;
}

.grid .yel td {
  background: #ffff33;
  border-color: #ffff33;
}

.grid .org td {
  background: #fbb829;
  border-color: #fbb829;
}

.grid tr td.blank {
  background: #fff;
  border-color: #d4d4d4;
}

.grid td.red {
  color: #e00000;
  -webkit-text-stroke-color: #e00000;
}

.grid td.total {
  border-top: 2px solid #333;
  border-bottom: 4px double #222;
}

.acct-in {
  display: flex;
  justify-content: space-between;
  padding: 0 9px 0 8px;
}

.acct-in.two {
  padding-right: 6px;
}

.grid td.indent {
  padding-left: 20px;
}

.grid td.err {
  font-family: 'Liberation Serif', serif;
  font-size: 29px;
  letter-spacing: .3px;
  -webkit-text-stroke: .4px #111;
  position: relative;
  padding-left: 6px;
}

.grid td.mid {
  text-align: center;
  letter-spacing: 0;
}

.grid td.tightcell {
  padding: 0 0 4px 2px;
}

.flagged::before {
  content: "";
  position: absolute;
  left: 1px;
  top: 0;
  width: 7px;
  height: 9px;
  background: #1f7a2e;
  clip-path: polygon(0 0, 100% 0, 0 100%);
}

.over {
  position: relative;
}

.cursor {
  position: absolute;
  left: 26px;
  top: 19px;
}

.pasteopt {
  position: absolute;
  left: 1865px;
  bottom: 4px;
}
```
